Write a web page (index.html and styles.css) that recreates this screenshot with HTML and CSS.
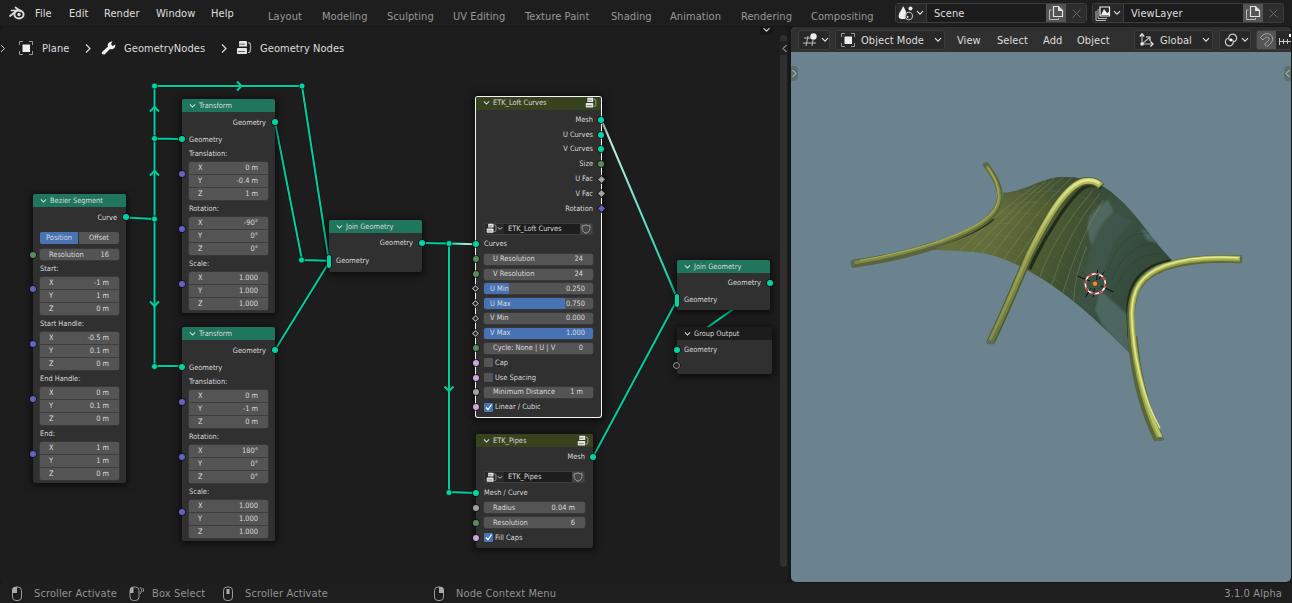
FILE: index.html
```html
<!DOCTYPE html>
<html lang="en">
<head>
<meta charset="utf-8">
<title>Geometry Nodes</title>
<link rel="stylesheet" href="styles.css">
</head>
<body>
<svg class="defs" width="0" height="0">
  <symbol id="chev" viewBox="0 0 8 6"><path d="M1 1.2 4 4.2 7 1.2" fill="none" stroke="currentColor" stroke-width="1.2"/></symbol>
  <symbol id="tree" viewBox="0 0 16 16"><g fill="#e6e6e6"><path d="M4 1h6a1 1 0 0 1 1 1v4.500H3V2a1 1 0 0 1 1-1zM2 8h8a1 1 0 0 1 1 1v4a1 1 0 0 1-1 1H2a1 1 0 0 1-1-1V9a1 1 0 0 1 1-1z"/></g><path d="M3 4.200h6M2 11.500h7" stroke="#444" stroke-width=".8"/><path d="M12 3c2.500-.5 2.500 1 2.500 3v4c0 2-.5 2.500-2.500 2.500" fill="none" stroke="#aaa" stroke-width="1.200"/></symbol>
  <symbol id="obj" viewBox="0 0 14 14"><path d="M3.500 3.500h7.500v7.500H3.500z" fill="#eee"/><path d="M.5 4V.5H4M10 .5h3.500V4M13.500 10v3.500H10M4 13.500H.5V10" fill="none" stroke="#999"/></symbol>
  <symbol id="shield" viewBox="0 0 10 10"><path d="M5 .8C3.500 1.800 2 1.800 1 1.800c0 4 .5 6 4 7.500 3.500-1.500 4-3.500 4-7.500-1 0-2.500 0-4-1z" fill="none" stroke="#aaa" stroke-width=".9"/></symbol>
  <symbol id="copy" viewBox="0 0 16 16"><path d="M5.500 1.500h5l4 4v6h-9z" fill="none" stroke="#e2e2e2" stroke-width="1.2"/><path d="M10 1v5h5z" fill="#e2e2e2"/><path d="M3.500 5h-2v9.500h9V13" fill="none" stroke="#bbb"/></symbol>
</svg>

<header class="topbar">
  <svg class="logo" viewBox="0 0 16 14"><path d="M1 10 8 4.500H2.500M6.500 1.500 12 5.500" fill="none" stroke="#ddd" stroke-width="1.7" stroke-linecap="round"/><ellipse cx="10" cy="8.500" rx="4.600" ry="4" fill="none" stroke="#ddd" stroke-width="1.900"/><circle cx="10" cy="8.500" r="1.700" fill="#ddd"/></svg>
  <nav class="menus"><span>File</span><span>Edit</span><span>Render</span><span>Window</span><span>Help</span></nav>
  <nav class="tabs"><span>Layout</span><span>Modeling</span><span>Sculpting</span><span>UV Editing</span><span>Texture Paint</span><span>Shading</span><span>Animation</span><span>Rendering</span><span>Compositing</span></nav>
  <div class="picker">
    <span class="pick-type"><svg width="16" height="15" viewBox="0 0 16 15"><path d="M5 0c2 3 3.500 6 3.500 9A4 4 0 0 0 7 13H3a3 3 0 0 1-2.500-3C1 6 4 4 5 0z" fill="#eee"/><circle cx="12.500" cy="2.500" r="2" fill="#eee"/><circle cx="10.800" cy="10" r="3.700" fill="none" stroke="#bbb" stroke-width="1.100"/><circle cx="9.500" cy="11" r="1" fill="#eee"/></svg><svg width="8" height="6"><use href="#chev"/></svg></span>
    <span class="pick-name">Scene</span><span class="pick-new"><svg width="16" height="16"><use href="#copy"/></svg></span><span class="pick-x"><svg width="9" height="9" viewBox="0 0 9 9"><path d="M.5.5l8 8M8.500.5l-8 8" stroke="#666"/></svg></span>
  </div>
  <div class="picker layer">
    <span class="pick-type"><svg width="16" height="15" viewBox="0 0 16 15"><path d="M5 1h9.500v9H5z" fill="none" stroke="#eee" stroke-width="1.200"/><path d="M6 9l3-6 3 4 2-1v3z" fill="#eee"/><path d="M3 3v9.500h9M1 5v9.500h10" fill="none" stroke="#bbb"/></svg><svg width="8" height="6"><use href="#chev"/></svg></span>
    <span class="pick-name">ViewLayer</span><span class="pick-new"><svg width="16" height="16"><use href="#copy"/></svg></span><span class="pick-x"><svg width="9" height="9" viewBox="0 0 9 9"><path d="M.5.5l8 8M8.500.5l-8 8" stroke="#666"/></svg></span>
  </div>
</header>

<main class="areas">
<section class="editor">
  <div class="crumbs">
    <svg width="6" height="9" viewBox="0 0 6 9"><path d="M1 1l3.500 3.500L1 8" fill="none" stroke="#ccc"/></svg>
    <svg class="c-obj" width="14" height="14"><use href="#obj"/></svg><span class="c1">Plane</span>
    <svg width="6" height="9" viewBox="0 0 6 9"><path d="M1 .5l4 4-4 4" fill="none" stroke="#ddd" stroke-width="1.200"/></svg>
    <svg class="c-wr" width="15" height="14" viewBox="0 0 15 14"><path d="M1 11l6-5.500C6 3 8 .5 11.500.5L10 3l1.500 2 3-1.500C14.500 7 12 9 9 8l-5.500 5.500C1.500 14 0 12.500 1 11z" fill="#eee"/></svg><span class="c2">GeometryNodes</span>
    <svg width="6" height="9" viewBox="0 0 6 9"><path d="M1 .5l4 4-4 4" fill="none" stroke="#ddd" stroke-width="1.200"/></svg>
    <svg class="c-tr" width="16" height="16"><use href="#tree"/></svg><span>Geometry Nodes</span>
  </div>
  <span class="pull-down"><svg width="9" height="6"><use href="#chev"/></svg></span>
  <span class="scroll"></span>
  <span class="pull-side"><svg width="5" height="9" viewBox="0 0 5 9"><path d="M4.500 1 1 4.500 4.500 8" fill="none" stroke="#ccc"/></svg></span>

  <svg class="links" width="790" height="556" viewBox="0 27 790 556">
    <defs>
      <linearGradient id="sel1" gradientUnits="userSpaceOnUse" x1="449" y1="0" x2="476" y2="0"><stop offset="0" stop-color="#00d6a3"/><stop offset="1" stop-color="#fff"/></linearGradient>
      <linearGradient id="sel2" gradientUnits="userSpaceOnUse" x1="601" y1="119" x2="677" y2="298"><stop offset="0" stop-color="#dcf3ee"/><stop offset="1" stop-color="#00ce9d"/></linearGradient>
    </defs>
    <g fill="none" stroke="#111" stroke-opacity=".6" stroke-width="4"><path d="M126 217l28 2M154 86v280h27M154 139h27M154 86h148l26 170M275 122l27 138 26 1M275 350l53-86M422 243h27v249l27 1M593 457l84-157"/></g>
    <g fill="none" stroke="#00ce9d" stroke-width="2">
      <path d="M126 217.500l28 1.500M154.500 86v280H181M154 138.500l27 .5M154 86h148l26.500 172M275 122l27 138 26 .8M275 350l53-86M422 243l27 .5V492l27 1M593 457l84-157M770 283l-93 66"/>
      <path d="M449 243.500l27 .7" stroke="url(#sel1)"/><path d="M601 119l76 179" stroke="url(#sel2)"/>
      <path d="M237 81.500l4.500 4.500-4.500 4.500M150 111.500l4.500-4.500 4.500 4.500M150 175.500l4.500-4.500 4.500 4.500M150 301.500l4.500 4.500 4.500-4.500M444.500 386.500l4.500 4.500 4.500-4.500"/>
    </g>
    <g fill="#00d6a3" stroke="#121212" stroke-width=".7"><circle cx="154.500" cy="86" r="3"/><circle cx="154.500" cy="138.500" r="3"/><circle cx="154.500" cy="219" r="3"/><circle cx="154.500" cy="366.500" r="3"/><circle cx="302" cy="86" r="3"/><circle cx="301.500" cy="260" r="3"/><circle cx="449" cy="243.500" r="3"/><circle cx="449" cy="492.500" r="3"/></g>
  </svg>

  <article class="node bezier">
    <h2><svg><use href="#chev"/></svg>Bezier Segment</h2>
    <div class="out big">Curve<i class="s r"></i></div>
    <div class="seg"><b>Position</b><span>Offset</span></div>
    <div class="field"><span>Resolution</span><span>16</span><i class="s green"></i></div>
    <div class="lab">Start:</div>
    <div class="vec"><p><span>X</span><span>-1 m</span></p><p><span>Y</span><span>1 m</span></p><p><span>Z</span><span>0 m</span></p><i class="s blue"></i></div>
    <div class="lab">Start Handle:</div>
    <div class="vec"><p><span>X</span><span>-0.5 m</span></p><p><span>Y</span><span>0.1 m</span></p><p><span>Z</span><span>0 m</span></p><i class="s blue"></i></div>
    <div class="lab">End Handle:</div>
    <div class="vec"><p><span>X</span><span>0 m</span></p><p><span>Y</span><span>0.1 m</span></p><p><span>Z</span><span>0 m</span></p><i class="s blue"></i></div>
    <div class="lab">End:</div>
    <div class="vec"><p><span>X</span><span>1 m</span></p><p><span>Y</span><span>1 m</span></p><p><span>Z</span><span>0 m</span></p><i class="s blue"></i></div>
  </article>

  <article class="node tf tf1">
    <h2><svg><use href="#chev"/></svg>Transform</h2>
    <div class="out big">Geometry<i class="s r"></i></div>
    <div class="in">Geometry<i class="s"></i></div>
    <div class="lab">Translation:</div>
    <div class="vec"><p><span>X</span><span>0 m</span></p><p><span>Y</span><span>-0.4 m</span></p><p><span>Z</span><span>1 m</span></p><i class="s blue"></i></div>
    <div class="lab">Rotation:</div>
    <div class="vec"><p><span>X</span><span>-90°</span></p><p><span>Y</span><span>0°</span></p><p><span>Z</span><span>0°</span></p><i class="s blue"></i></div>
    <div class="lab">Scale:</div>
    <div class="vec"><p><span>X</span><span>1.000</span></p><p><span>Y</span><span>1.000</span></p><p><span>Z</span><span>1.000</span></p><i class="s blue"></i></div>
  </article>

  <article class="node tf tf2">
    <h2><svg><use href="#chev"/></svg>Transform</h2>
    <div class="out big">Geometry<i class="s r"></i></div>
    <div class="in">Geometry<i class="s"></i></div>
    <div class="lab">Translation:</div>
    <div class="vec"><p><span>X</span><span>0 m</span></p><p><span>Y</span><span>-1 m</span></p><p><span>Z</span><span>0 m</span></p><i class="s blue"></i></div>
    <div class="lab">Rotation:</div>
    <div class="vec"><p><span>X</span><span>180°</span></p><p><span>Y</span><span>0°</span></p><p><span>Z</span><span>0°</span></p><i class="s blue"></i></div>
    <div class="lab">Scale:</div>
    <div class="vec"><p><span>X</span><span>1.000</span></p><p><span>Y</span><span>1.000</span></p><p><span>Z</span><span>1.000</span></p><i class="s blue"></i></div>
  </article>

  <article class="node join j1">
    <h2><svg><use href="#chev"/></svg>Join Geometry</h2>
    <div class="out big">Geometry<i class="s r"></i></div>
    <div class="in">Geometry<i class="s multi"></i></div>
  </article>

  <article class="node group loft">
    <h2><svg><use href="#chev"/></svg><span>ETK_Loft Curves</span><svg class="t"><use href="#tree"/></svg></h2>
    <div class="row out">Mesh<i class="s r"></i></div>
    <div class="row out">U Curves<i class="s r"></i></div>
    <div class="row out">V Curves<i class="s r"></i></div>
    <div class="row out">Size<i class="s r green"></i></div>
    <div class="row out">U Fac<i class="s r dia grey"></i></div>
    <div class="row out">V Fac<i class="s r dia grey"></i></div>
    <div class="row out">Rotation<i class="s r dia blue"></i></div>
    <div class="idblock"><span><svg class="t"><use href="#tree"/></svg><svg class="d"><use href="#chev"/></svg></span><em>ETK_Loft Curves</em><span><svg class="sh"><use href="#shield"/></svg></span></div>
    <div class="row in">Curves<i class="s"></i></div>
    <div class="row"><div class="field"><span>U Resolution</span><span>24</span></div><i class="s green"></i></div>
    <div class="row"><div class="field"><span>V Resolution</span><span>24</span></div><i class="s green"></i></div>
    <div class="row"><div class="field slide q1"><span>U Min</span><span>0.250</span></div><i class="s dia ring"></i></div>
    <div class="row"><div class="field slide q3"><span>U Max</span><span>0.750</span></div><i class="s dia ring"></i></div>
    <div class="row"><div class="field slide"><span>V Min</span><span>0.000</span></div><i class="s dia ring"></i></div>
    <div class="row"><div class="field slide q4"><span>V Max</span><span>1.000</span></div><i class="s dia ring"></i></div>
    <div class="row"><div class="field"><span>Cycle: None | U | V</span><span>0</span></div><i class="s green"></i></div>
    <div class="row chk"><u></u>Cap<i class="s pink"></i></div>
    <div class="row chk"><u></u>Use Spacing<i class="s pink"></i></div>
    <div class="row"><div class="field"><span>Minimum Distance</span><span>1 m</span></div><i class="s grey"></i></div>
    <div class="row chk"><u class="on"><svg viewBox="0 0 9 9"><path d="M2 4.500 4 6.800 7.500 1.500" fill="none" stroke="#fff" stroke-width="1.300"/></svg></u>Linear / Cubic<i class="s pink"></i></div>
  </article>

  <article class="node group pipes">
    <h2><svg><use href="#chev"/></svg><span>ETK_Pipes</span><svg class="t"><use href="#tree"/></svg></h2>
    <div class="row out">Mesh<i class="s r"></i></div>
    <div class="idblock"><span><svg class="t"><use href="#tree"/></svg><svg class="d"><use href="#chev"/></svg></span><em>ETK_Pipes</em><span><svg class="sh"><use href="#shield"/></svg></span></div>
    <div class="row in">Mesh / Curve<i class="s"></i></div>
    <div class="row"><div class="field"><span>Radius</span><span>0.04 m</span></div><i class="s grey"></i></div>
    <div class="row"><div class="field"><span>Resolution</span><span>6</span></div><i class="s green"></i></div>
    <div class="row chk"><u class="on"><svg viewBox="0 0 9 9"><path d="M2 4.500 4 6.800 7.500 1.500" fill="none" stroke="#fff" stroke-width="1.300"/></svg></u>Fill Caps<i class="s pink"></i></div>
  </article>

  <article class="node join j2">
    <h2><svg><use href="#chev"/></svg>Join Geometry</h2>
    <div class="out big">Geometry<i class="s r"></i></div>
    <div class="in">Geometry<i class="s multi"></i></div>
  </article>

  <article class="node output">
    <h2><svg><use href="#chev"/></svg>Group Output</h2>
    <div class="in">Geometry<i class="s"></i></div>
    <div class="in"><i class="s empty"></i></div>
  </article>
</section>

<section class="view3d">
  <div class="vhead">
    <span class="btn b1"><svg width="15" height="14" viewBox="0 0 15 14"><path d="M1 5h7M0 10h13M5 3 3 13M10 7 9 13" stroke="#bbb" fill="none"/><circle cx="10.500" cy="3.500" r="3.200" fill="#eee"/></svg><svg width="8" height="6"><use href="#chev"/></svg></span>
    <span class="btn b2"><svg width="14" height="14"><use href="#obj"/></svg><span>Object Mode</span><svg width="8" height="6"><use href="#chev"/></svg></span>
    <nav class="vmenus"><span>View</span><span>Select</span><span>Add</span><span>Object</span></nav>
    <span class="btn b3"><svg width="15" height="14" viewBox="0 0 15 14"><path d="M3 2v9h10M3 11l7-6" fill="none" stroke="#bbb" stroke-width="1.100"/><path d="M.8 3.500 3 .8l2.200 2.700M11.500 8.500 14 11l-2.500 2.500M7 4h4v4" fill="none" stroke="#eee" stroke-width="1.200"/><circle cx="3" cy="11" r="1.700" fill="#eee"/></svg><span>Global</span><svg width="8" height="6"><use href="#chev"/></svg></span>
    <span class="btn b4"><svg width="14" height="14" viewBox="0 0 14 14"><g fill="none" stroke="#ccc" stroke-width="1.200"><path d="M5.500 7.500A4 4 0 1 1 9.500 9"/><path d="M8.500 6.500A4 4 0 1 1 4.500 5"/></g><circle cx="7" cy="7" r="1.400" fill="#fff"/></svg><svg width="8" height="6"><use href="#chev"/></svg></span>
    <span class="btn b5"><span><svg width="15" height="15" viewBox="0 0 15 15"><path d="M1.500 4.500C5-.5 11-.5 13 3.500s-1 7-5 10L5.500 11c3-2.500 5.500-4 4.500-6S6 4.500 4 7z" fill="none" stroke="#aaa" stroke-linejoin="round"/></svg></span><svg width="15" height="12" viewBox="0 0 15 12"><path d="M0 7.500h15M.5 4v7M4.500 5v5M8.500 5v5M12.500 4v7" stroke="#ccc"/><path d="M10 0h5v3h-5z" fill="#fff"/></svg></span>
  </div>
  <svg class="scene" width="500" height="530" viewBox="791 52 500 530">
    <defs>
      <linearGradient id="surf" gradientUnits="userSpaceOnUse" x1="300" y1="180" x2="960" y2="420"><stop offset="0" stop-color="#65703f"/><stop offset=".25" stop-color="#636e3c"/><stop offset=".42" stop-color="#525f33"/><stop offset=".6" stop-color="#3f5033"/><stop offset=".72" stop-color="#3b5245"/><stop offset=".88" stop-color="#364b3b"/><stop offset="1" stop-color="#354839"/></linearGradient>
      <linearGradient id="shade" x1="0" y1="0" x2="0" y2="1"><stop offset="0" stop-color="#2c4038" stop-opacity=".5"/><stop offset=".2" stop-color="#2c4038" stop-opacity="0"/></linearGradient>
      <linearGradient id="midp" gradientUnits="userSpaceOnUse" x1="0" y1="580" x2="0" y2="90"><stop offset="0" stop-color="#687343"/><stop offset=".5" stop-color="#828b42"/><stop offset="1" stop-color="#b5bd5e"/></linearGradient>
      <linearGradient id="midh" gradientUnits="userSpaceOnUse" x1="0" y1="580" x2="0" y2="90"><stop offset="0" stop-color="#828b4a"/><stop offset=".5" stop-color="#9da453"/><stop offset="1" stop-color="#e3e68f"/></linearGradient>
      <clipPath id="sc"><path d="M252 298C370 258 485 225 490 128C555 124 590 92 650 82C730 75 790 100 830 140C890 190 930 262 997 332C890 350 850 430 872 612C800 540 690 430 565 362C450 300 420 307 252 298z"/></clipPath>
      <filter id="soft"><feGaussianBlur stdDeviation="2.500"/></filter>
    </defs>
    <g transform="translate(840 150) scale(.33333)">
      <g clip-path="url(#sc)">
        <path d="M240 60h780v570H240z" fill="url(#surf)"/><path d="M240 70h780v570H240z" fill="url(#shade)"/>
        <path d="M747 200Q778 160 805 150L822 185Q775 225 757 290Q735 240 747 200zM780 420L870 500V615L790 530 765 480zM900 235l40 15 10 30-30-10z" fill="#587370" opacity=".7" filter="url(#soft)"/>
        <path d="M757 290Q775 225 822 185L880 215Q800 270 790 400L735 370Q740 330 757 290z" fill="#46605a" opacity=".35" filter="url(#soft)"/>
        <g fill="none" stroke="#8f9a5c" stroke-width="3" opacity=".4"><path d="M590 105Q480 180 360 302M620 92Q510 180 395 305M645 85Q550 160 425 310M670 82Q580 150 455 320M695 82Q600 170 485 335M720 84Q630 180 515 350M760 120Q640 260 600 380M780 130Q680 250 635 405M790 150Q715 270 668 430M740 290Q705 370 700 460"/></g>
        <g fill="none" stroke="#8b955c" stroke-width="2" opacity=".22"><path d="M400 280Q560 290 750 480M440 250Q620 260 760 430M470 220Q640 215 740 370M490 190Q640 170 750 310M500 165Q660 130 760 250M520 140Q700 90 800 190"/></g>
        <g fill="none" stroke="#273a30" stroke-width="2" opacity=".5"><path d="M800 370Q840 240 930 250M815 390Q860 280 950 280M830 410Q870 310 965 310"/></g>
      </g>
      <g fill="none" stroke-linecap="butt">
        <path d="M258 298C350 272 430 238 462 207" stroke="#26301c" stroke-width="5"/>
        <path d="M38 341C130 328 230 304 300 280C410 240 478 200 480 140C480 100 455 70 435 40" stroke="#59643a" stroke-width="17"/>
        <path d="M36 342C130 329 220 308 290 284" stroke="#59653c" stroke-width="24"/>
        <path d="M36 339C130 325 225 301 300 276C410 236 476 198 478 140C478 102 458 76 440 48" stroke="#7f8a43" stroke-width="10"/>
        <path d="M60 331C140 318 230 296 300 273C410 233 473 196 476 142C476 105 462 80 445 54" stroke="#a0a753" stroke-width="4"/>
        <path d="M569 358C612 262 700 120 745 107Q770 104 784 114" stroke="#222c1b" stroke-width="10"/>
        <path d="M451 578C490 500 530 400 570 310C615 220 675 105 735 94Q765 90 783 110" stroke="#4d592e" stroke-width="25"/>
        <path d="M450 578C489 500 529 400 569 310C614 220 674 104 735 93Q765 89 782 107" stroke="url(#midp)" stroke-width="18"/>
        <path d="M449 570C488 495 527 398 567 308C612 218 673 102 735 91Q762 88 778 100" stroke="url(#midh)" stroke-width="8"/>
        <path d="M990 331C900 348 860 400 863 490Q863 550 871 608" stroke="#1d2b21" stroke-width="7"/>
        <path d="M1206 328C1130 324 1040 328 975 350C900 378 876 420 873 490C872 610 900 750 956 868" stroke="#5c6832" stroke-width="23"/>
        <path d="M956 868C899 750 885 640 877 560" stroke="#59663b" stroke-width="30"/>
        <path d="M1206 327C1130 322 1040 326 975 348C900 376 878 420 875 490C878 610 905 750 960 865" stroke="#959e49" stroke-width="17"/>
        <path d="M1206 325C1130 320 1040 324 975 347C900 375 877 420 875 490C878 610 907 748 962 862" stroke="#bdc465" stroke-width="10"/>
        <path d="M1195 323C1130 319 1040 322 975 346C900 374 876 420 875 490C878 610 907 740 960 835" stroke="#e3e897" stroke-width="4"/>
      </g>
      <g fill="#596c58"><ellipse cx="38" cy="341" rx="6" ry="12"/><ellipse cx="451" cy="577" rx="13" ry="6"/><ellipse cx="957" cy="867" rx="16" ry="6"/><ellipse cx="1203" cy="328" rx="4" ry="11"/><ellipse cx="435" cy="41" rx="7" ry="4"/></g>
      <path d="M712 378l38 15M782 408l38 18M773 360l-3 30M763 415l-3 25M793 365l-17 24M753 415l-16 25" stroke="#080808" stroke-width="3"/>
      <circle cx="766" cy="401" r="30" fill="none" stroke="#f4f4f4" stroke-width="4.500"/><circle cx="766" cy="401" r="30" fill="none" stroke="#d3242c" stroke-width="4.500" stroke-dasharray="11.780 11.780"/>
      <circle cx="765" cy="401" r="7.500" fill="#ff8a20" stroke="#543612" stroke-width="1.500"/>
    </g>
  </svg>
  <span class="pull-l"><svg width="5" height="9" viewBox="0 0 5 9"><path d="M.5 1 4 4.500.5 8" fill="none" stroke="#ccc"/></svg></span>
  <span class="pull-r"><svg width="5" height="9" viewBox="0 0 5 9"><path d="M4.500 1 1 4.500 4.500 8" fill="none" stroke="#ccc"/></svg></span>
</section>
</main>

<footer class="status">
  <span class="hint h1"><svg width="17" height="16" viewBox="0 0 17 16"><rect x="1.500" y="1" width="9" height="13.500" rx="3.500" fill="none" stroke="#999"/><path d="M1 7V4a3.500 3.500 0 0 1 3.500-3H6v6z" fill="#aaa"/></svg>Scroller Activate</span>
  <span class="hint h2"><svg width="17" height="16" viewBox="0 0 17 16"><rect x="1" y="1" width="9" height="13.500" rx="3.500" fill="none" stroke="#999"/><path d="M1 7V4a3.500 3.500 0 0 1 3.500-3v6z" fill="#aaa"/><path d="M11.500 1q2 3 0 7M14 2q1 2 0 4" fill="none" stroke="#999"/></svg>Box Select</span>
  <span class="hint h3"><svg width="17" height="16" viewBox="0 0 17 16"><rect x="1.500" y="1" width="9" height="13.500" rx="3.500" fill="none" stroke="#999"/><rect x="4.500" y="3" width="3" height="5" fill="#aaa"/></svg>Scroller Activate</span>
  <span class="hint h4"><svg width="17" height="16" viewBox="0 0 17 16"><rect x="1.500" y="1" width="9" height="13.500" rx="3.500" fill="none" stroke="#999"/><path d="M11 7V4a3.500 3.500 0 0 0-3.500-3H6v6z" fill="#aaa"/></svg>Node Context Menu</span>
  <span class="ver">3.1.0 Alpha</span>
</footer>
</body>
</html>
```
FILE: styles.css
```css
* { box-sizing: border-box; margin: 0; padding: 0; }
body { width: 1292px; height: 603px; overflow: hidden; background: #181818; color: #dedede; font: 11px/14px "DejaVu Sans Condensed", "DejaVu Sans", sans-serif; font-stretch: condensed; letter-spacing: .06px; display: flex; flex-direction: column; white-space: nowrap; }
svg { display: block; flex: none; }
.defs { position: absolute; }

.topbar { height: 26px; flex: none; background: #1e1e1e; display: flex; padding: 0 9px; }
.logo { width: 16px; height: 14px; margin-top: 6px; }
.menus { display: grid; grid-template-columns: 34px 35px 52px 55px 57px; padding: 7px 0 0 10px; }
.tabs { display: grid; grid-template-columns: 54px 65px 66px 72px 86px 59px 71px 70px 84px; padding-top: 10px; color: #989898; }
.picker { width: 192px; height: 20px; margin-top: 3px; border: 1px solid #3c3c3c; border-radius: 3px; display: flex; background: #1c1c1c; flex: none; }
.layer { margin-left: 5px; }
.pick-type { width: 31px; background: #282828; border-right: 1px solid #3c3c3c; display: flex; align-items: center; justify-content: center; gap: 2px; }
.pick-name { flex: 1; padding: 3px 0 0 7px; }
.pick-new { width: 20px; background: #545454; display: flex; align-items: center; justify-content: center; }
.pick-x { width: 20px; background: #2d2d2d; display: flex; align-items: center; justify-content: center; }

.areas { flex: none; height: 557px; display: flex; gap: 3px; padding-top: 1px; }
.editor { position: relative; width: 788px; height: 556px; background: #1d1d1d; border-radius: 5px; overflow: hidden; }
.crumbs { display: flex; align-items: center; height: 42px; }
.crumbs span { padding-top: 1px; }
.c-obj { margin: 0 9px 0 13px; }
.c1 { width: 43px; }
.c-wr { margin: 0 8px 0 10px; }
.c2 { width: 97px; }
.c-tr { margin: 0 8px 0 9px; }
.pull-down { position: absolute; left: 760px; top: 0; width: 13px; height: 8px; background: #161616; border-radius: 0 0 4px 4px; padding: 0 2px; color: #ccc; }
.scroll { position: absolute; left: 780px; top: 8px; width: 7px; height: 532px; border-radius: 4px; background: #303030; }
.pull-side { position: absolute; left: 780px; top: 14px; width: 8px; height: 14px; background: #202020; padding: 3px 2px; }
.links { position: absolute; left: 0; top: 0; }

.node { position: absolute; width: 93px; background: #303030; border-radius: 2px; box-shadow: 0 1px 7px 2px rgba(0,0,0,.55); font-size: 7.4px; line-height: 10px; letter-spacing: 0; color: #dadada; display: flex; flex-direction: column; }
.node h2 { height: 13px; flex: none; background: #1f765c; font: inherit; padding-left: 7px; display: flex; align-items: center; gap: 3px; border-radius: 2px 2px 0 0; }
.node h2 svg { width: 7px; height: 6px; }
.node h2 span { flex: 1; }
.node h2 .t { width: 12px; height: 12px; margin-right: 4px; }
.bezier { left: 33px; top: 167px; height: 289px; }
.tf { left: 182px; height: 214px; }
.tf1 { top: 72px; }
.tf2 { top: 300px; }
.j1 { left: 329px; top: 193px; height: 52px; }
.j2 { left: 677px; top: 233px; height: 50px; }
.output { left: 677px; top: 300px; width: 95px; height: 47px; }
.output h2 { background: #1c1c1c; }
.out, .in, .lab, .row { position: relative; display: flex; align-items: center; padding: 0 9px 0 7px; }
.out { justify-content: flex-end; }
.big { height: 20px; padding-top: 1px; flex: none; }
.in, .output .in { height: 14px; flex: none; }
.tf .in { padding-top: 1px; }
.j1 .in { margin-top: 2px; }
.j1 .big { height: 19px; }
.j2 .big { height: 19px; }
.j2 .in { margin-top: 1px; }
.output { gap: 1px; }
.output h2 { margin-bottom: 2px; }
.lab { height: 16px; flex: none; }
.seg { display: flex; height: 12px; margin: 5px 7px; background: #545454; border-radius: 2px; overflow: hidden; line-height: 12px; text-align: center; flex: none; }
.seg b { font-weight: normal; background: #4772b3; width: 39px; border-right: 1px solid #333; }
.seg span { flex: 1; }
.field { position: relative; display: flex; justify-content: space-between; align-items: center; height: 11px; flex: none; margin: 0 7px; padding: 0 9px; background: #545454; border-radius: 2px; box-shadow: 0 0 0 .5px #414141; }
.field + .lab { margin-top: 1px; }
.vec { position: relative; height: 38px; margin: 0 7px 1px; flex: none; border-radius: 2px; background: #545454; box-shadow: 0 0 0 .5px #414141; }
.vec p { height: 13px; line-height: 11px; padding: 0 10px 0 9px; display: flex; justify-content: space-between; }
.vec p:first-child { height: 12px; }
.vec p + p { border-top: 1px solid #3d3d3d; }

.s { position: absolute; left: -3.5px; top: calc(50% - 3px); width: 6px; height: 6px; border-radius: 50%; background: #00d6a3; box-shadow: 0 0 0 .7px #121212; }
.s.r { left: auto; right: -3px; }
.bezier .field .s { left: -10.5px; }
.vec .s { left: -10.5px; top: 9px; }
.green { background: #598c5c; }
.blue { background: #6363c7; }
.grey { background: #a1a1a1; }
.pink { background: #cca6d6; }
.dia { border-radius: 0; width: 5px; height: 5px; top: calc(50% - 2.5px); transform: rotate(45deg); }
.ring { left: -3px; background: #222; border: 1px solid #aaa; }
.multi { width: 4px; height: 13px; border-radius: 2px; left: -2.5px; top: 1px; }
.empty { background: #252525; border: 1px solid #999; width: 7px; height: 7px; left: -4px; }

.group h2 { background: #37431f; }
.loft { left: 476px; top: 70px; width: 125px; height: 320px; box-shadow: 0 0 0 1px #f4f4f4, 0 1px 8px 3px rgba(0,0,0,.6); }
.loft h2 { margin-bottom: 3px; height: 12.500px; }
.pipes { left: 476px; top: 407px; width: 117px; height: 114px; }
.pipes h2 { margin-bottom: 3px; }
.row { height: 14.800px; flex: none; padding: 0 8px; }
.row .field { flex: 1; margin: 0; }
.slide { padding-left: 6px; padding-right: 7px; }
.field span:last-of-type { margin-right: 1px; }
.q1 { background: linear-gradient(90deg, #4772b3 23%, #545454 23%); }
.q3 { background: linear-gradient(90deg, #4772b3 74%, #545454 74%); }
.q4 { background: #4772b3; }
.chk u { width: 9px; height: 9px; border-radius: 1px; background: #545454; margin-right: 2px; }
.chk .on { background: #4772b3; }
.idblock { height: 12px; margin: 6.500px 8px 2.500px; display: flex; flex: none; border: 1px solid #3d3d3d; border-radius: 2px; background: #1d1d1d; }
.idblock span { display: flex; align-items: center; justify-content: center; background: #282828; width: 19px; }
.idblock span:last-child { width: 12px; background: #444; }
.idblock em { flex: 1; font-style: normal; padding-left: 4px; }
.idblock .t { width: 11px; height: 11px; }
.idblock .d { width: 6px; height: 5px; }
.sh { width: 10px; height: 10px; }

.view3d { position: relative; width: 500px; height: 555px; background: #6b828f; border-radius: 5px; overflow: hidden; }
.vhead { height: 25px; background: #303030; display: flex; align-items: flex-start; padding: 3px 0 0 7px; }
.btn { height: 20px; background: #282828; border: 1px solid #3d3d3d; border-radius: 3px; display: flex; align-items: center; flex: none; }
.b1 { width: 32px; padding-left: 4px; gap: 3px; margin-right: 5px; }
.b2 { width: 110px; padding: 0 2px 0 5px; gap: 6px; }
.b2 span, .b3 > span { flex: 1; padding-top: 1px; }
.vmenus { display: grid; grid-template-columns: 40px 46px 34px 57px; padding: 4px 0 0 12px; }
.b3 { width: 79px; padding: 0 2px 0 4px; gap: 6px; }
.b4 { width: 32px; margin-left: 6px; padding-left: 4px; gap: 3px; }
.b5 { width: 60px; margin-left: 5px; }
.b5 > span { width: 19px; height: 18px; background: #545454; padding: 2px; margin-right: 3px; }
.scene { position: absolute; left: 0; top: 25px; }
.pull-l, .pull-r { position: absolute; top: 39px; width: 7px; height: 15px; padding: 3px 1px; background: #5b706f; }
.pull-l { left: 0; border-radius: 0 4px 4px 0; }
.pull-r { right: 0; border-radius: 4px 0 0 4px; }

.status { flex: 1; display: flex; align-items: center; background: #1e1e1e; color: #929292; padding: 1px 10px 0 11px; letter-spacing: .12px; }
.hint { display: flex; align-items: center; gap: 6px; }
.h1, .h2, .h3 { flex: none; }
.h1 { width: 118px; }
.h2 { width: 93px; }
.h3 { width: 211px; }
.ver { margin-left: auto; }
```
